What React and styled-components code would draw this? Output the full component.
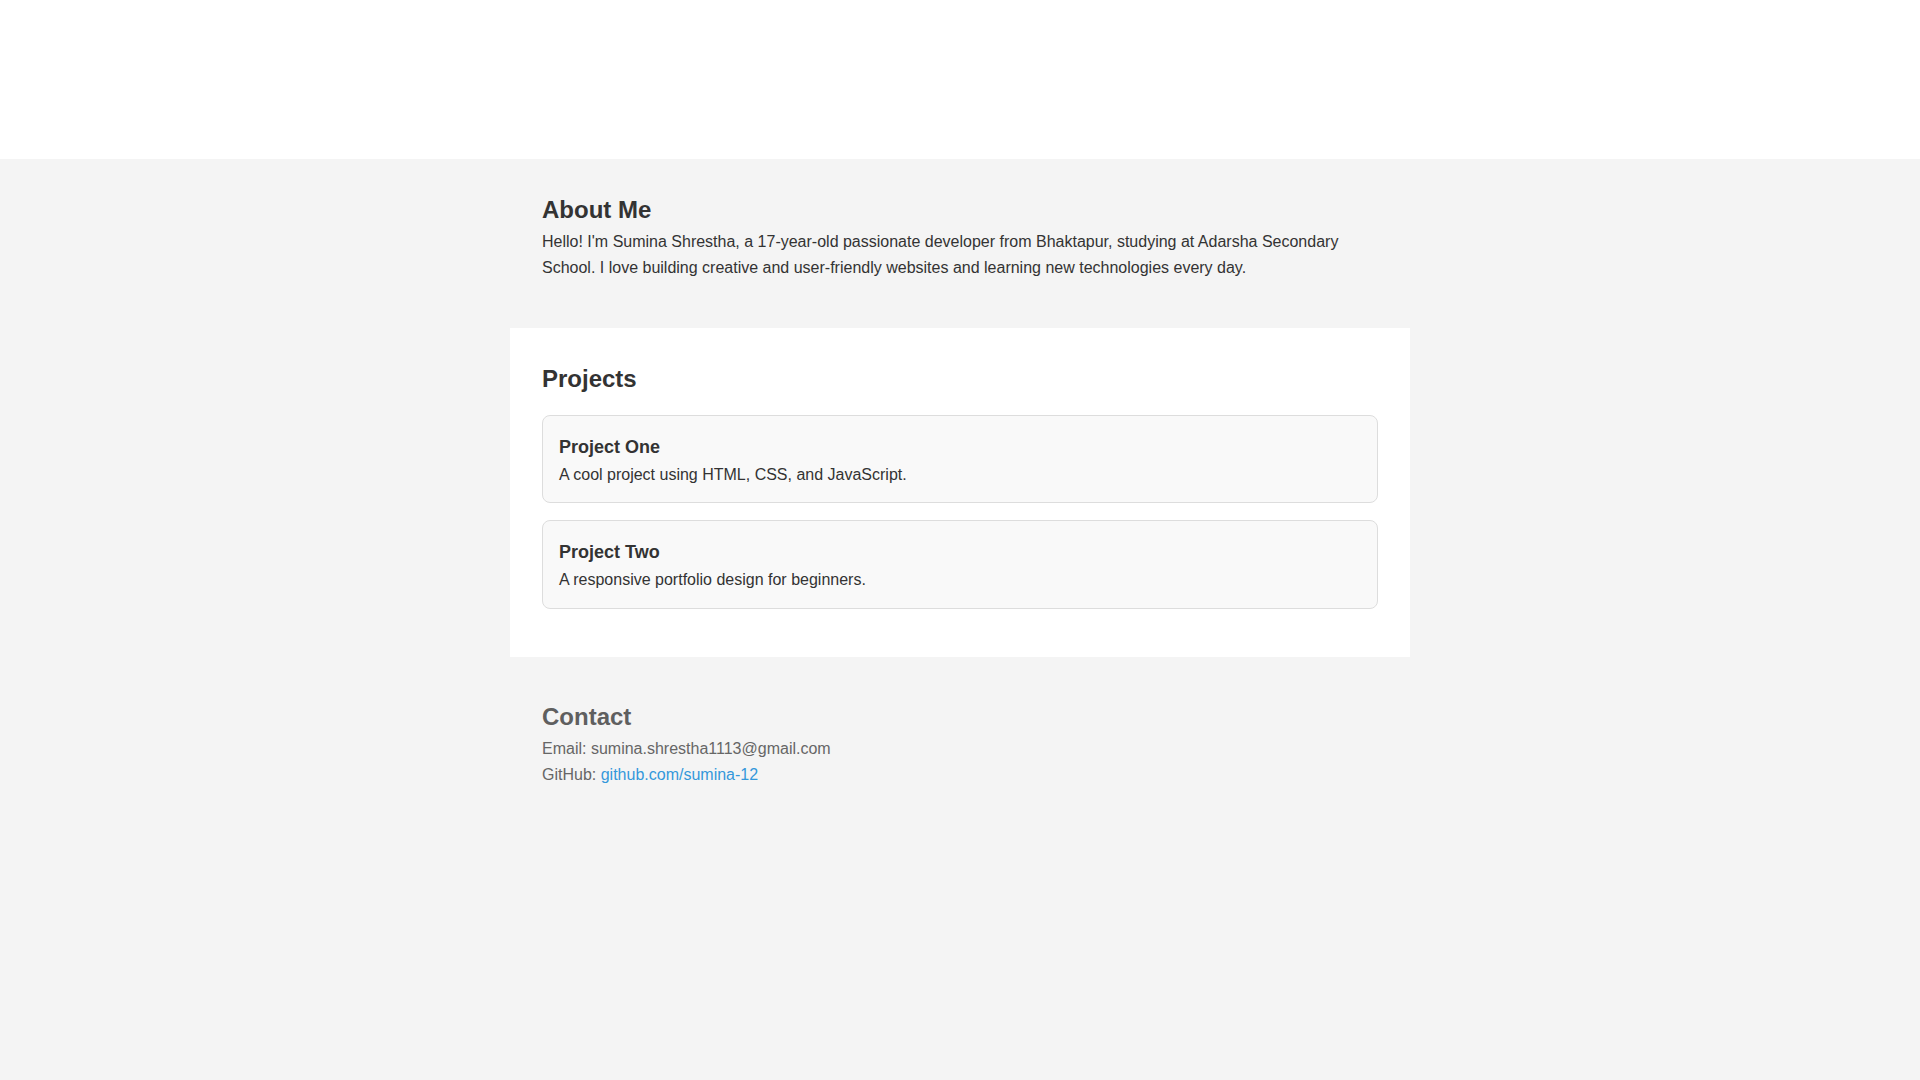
import React from "react";
import styled, { createGlobalStyle } from "styled-components";

const GlobalStyle = createGlobalStyle`
  html, body {
    margin: 0;
    padding: 0;
  }
  body {
    font-family: "Liberation Sans", Arial, sans-serif;
    background: #f4f4f4;
    color: #333;
    line-height: 1.6;
  }
  * { box-sizing: border-box; }
`;

const Header = styled.header`
  height: 159px;
  background: #ffffff;
`;

const Main = styled.main`
  display: flex;
  flex-direction: column;
`;

const Section = styled.section`
  width: 900px;
  margin: ${(p) => p.$mt || 0}px auto 0;
  padding: 32px;
  background: ${(p) => (p.$card ? "#ffffff" : "transparent")};
  color: ${(p) => (p.$muted ? "#666" : "#333")};
`;

const Heading = styled.h2`
  margin: 0;
  font-size: 24px;
  font-weight: 700;
  line-height: 1.6;
  color: ${(p) => (p.$muted ? "#5f5f5f" : "#333")};
`;

const Text = styled.p`
  margin: 0;
  font-size: 16px;
  line-height: 1.6;
`;

const ProjectList = styled.div`
  display: flex;
  flex-direction: column;
  gap: 17px;
  margin: 17px 0 16px;
`;

const ProjectCard = styled.div`
  background: #f9f9f9;
  border: 1px solid #ddd;
  border-radius: 8px;
  padding: 17px 16px 15px;
`;

const ProjectTitle = styled.h3`
  margin: 0;
  font-size: 18px;
  font-weight: 700;
  line-height: 1.6;
  color: #333;
`;

const Link = styled.a`
  color: #3498db;
  text-decoration: none;
`;

const projects = [
  { title: "Project One", desc: "A cool project using HTML, CSS, and JavaScript." },
  { title: "Project Two", desc: "A responsive portfolio design for beginners." },
];

export default function App() {
  return (
    <>
      <GlobalStyle />
      <Header />
      <Main>
        <Section>
          <Heading>About Me</Heading>
          <Text>
            Hello! I'm Sumina Shrestha, a 17-year-old passionate developer from Bhaktapur,
            studying at Adarsha Secondary School. I love building creative and user-friendly
            websites and learning new technologies every day.
          </Text>
        </Section>
        <Section $card $mt={15}>
          <Heading>Projects</Heading>
          <ProjectList>
            {projects.map((p) => (
              <ProjectCard key={p.title}>
                <ProjectTitle>{p.title}</ProjectTitle>
                <Text>{p.desc}</Text>
              </ProjectCard>
            ))}
          </ProjectList>
        </Section>
        <Section $muted $mt={9}>
          <Heading $muted>Contact</Heading>
          <Text>Email: sumina.shrestha1113@gmail.com</Text>
          <Text>
            GitHub: <Link href="#">github.com/sumina-12</Link>
          </Text>
        </Section>
      </Main>
    </>
  );
}
